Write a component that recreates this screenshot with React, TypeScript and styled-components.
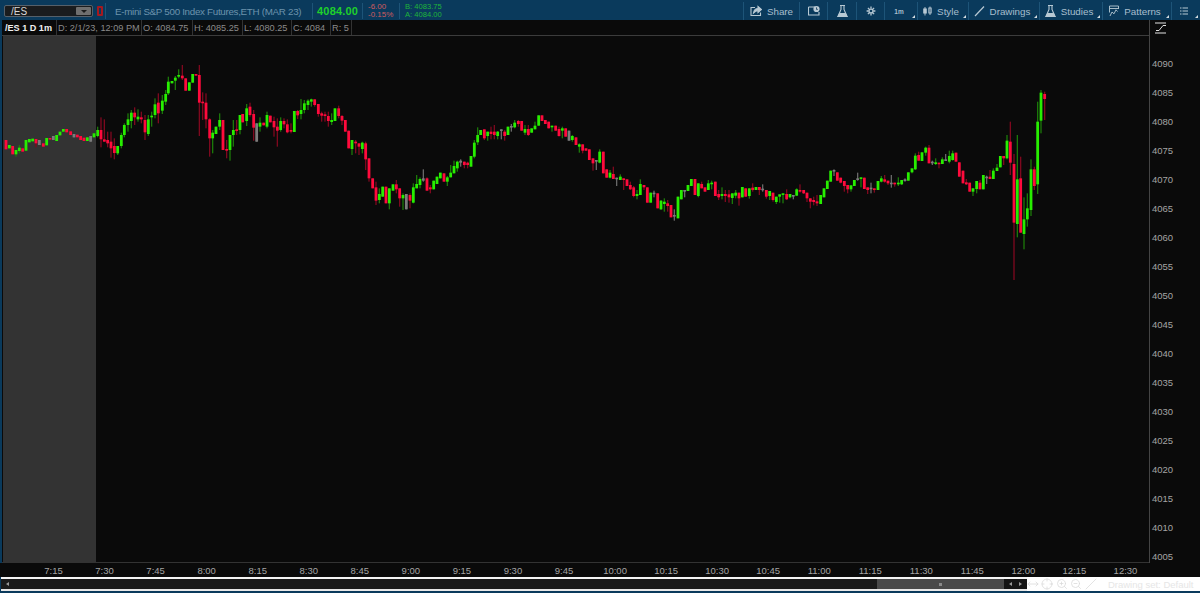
import React from "react";
import styled, { createGlobalStyle } from "styled-components";
import { Crosshair, MoveHorizontal, Slash, ZoomIn, ZoomOut } from "lucide-react";

const GlobalStyle = createGlobalStyle`
  html, body {
    margin: 0;
    padding: 0;
    background: #0a3a5c;
  }
  * {
    box-sizing: border-box;
  }
`;

const Page = styled.div`
  width: 1200px;
  height: 593px;
  display: flex;
  flex-direction: column;
  overflow: hidden;
  background: #0a3a5c;
  font-family: "Liberation Sans", Arial, sans-serif;
`;

const Toolbar = styled.div`
  height: 20px;
  flex: none;
  display: flex;
  align-items: center;
  padding: 2px 0 0 4px;
`;

const SymbolBox = styled.div`
  width: 89px;
  height: 12px;
  display: flex;
  align-items: center;
  justify-content: space-between;
  padding: 0 1px 0 6px;
  background: #1a1c1e;
  border: 1px solid #55606a;
  border-radius: 2px;
  color: #d8d8d8;
  font-size: 10px;
`;

const Caret = styled.span`
  width: 15px;
  height: 8px;
  display: flex;
  align-items: center;
  justify-content: center;
  background: #6f6f6f;
  border-radius: 1px;

  &::after {
    content: "";
    border-left: 3px solid transparent;
    border-right: 3px solid transparent;
    border-top: 3px solid #1c1c1c;
  }
`;

const Marker = styled.span`
  width: 6px;
  height: 10px;
  margin: 0 2px 0 4px;
  border: 2px solid #a5191f;
  border-radius: 1px;
  flex: none;
`;

const Divider = styled.span`
  width: 1px;
  height: 16px;
  flex: none;
  background: #1d5478;
`;

const Title = styled.div`
  width: 206px;
  padding-left: 9px;
  color: #6c93ac;
  font-size: 9.8px;
  letter-spacing: -0.3px;
  white-space: nowrap;
`;

const Last = styled.div`
  width: 49px;
  padding-left: 4px;
  color: #1fd02b;
  font-size: 11px;
  font-weight: 700;
  letter-spacing: 0.2px;
`;

const Stack = styled.div<{ $width: number; $color: string; $size: number }>`
  width: ${(p) => p.$width}px;
  padding-left: 5px;
  display: flex;
  flex-direction: column;
  color: ${(p) => p.$color};
  font-size: ${(p) => p.$size}px;
  line-height: 8px;
  white-space: nowrap;
`;

const Spacer = styled.div`
  flex: 1;
`;

const ToolButton = styled.div<{ $width: number; $menu?: boolean }>`
  position: relative;
  width: ${(p) => p.$width}px;
  height: 18px;
  flex: none;
  display: flex;
  align-items: center;
  justify-content: center;
  gap: 5px;
  padding-right: ${(p) => (p.$menu ? 4 : 0)}px;
  border-left: 1px solid #1d5478;
  color: #a8bfce;
  font-size: 9.8px;

  ${(p) =>
    p.$menu &&
    `&::after {
      content: "";
      position: absolute;
      right: 2px;
      bottom: 2px;
      border-left: 3px solid transparent;
      border-bottom: 3px solid #d5dde2;
    }`}
`;

const TinyLabel = styled.span`
  font-size: 6.5px;
  font-weight: 700;
  color: #a8bfce;
`;

const Body = styled.div`
  height: 543px;
  flex: none;
  display: flex;
  padding-left: 2px;
`;

const ChartColumn = styled.div`
  width: 1148px;
  flex: none;
  display: flex;
  flex-direction: column;
  background: #0a0a0a;
  border-right: 1px solid #444;
`;

const InfoRow = styled.div`
  height: 16px;
  flex: none;
  display: flex;
  align-items: stretch;
  padding-left: 2px;
  background: #0a0a0a;
  border-bottom: 1px solid #3c3c3c;
`;

const InfoCell = styled.div<{ $width: number; $strong?: boolean }>`
  width: ${(p) => p.$width}px;
  flex: none;
  display: flex;
  align-items: center;
  padding-left: 1px;
  border-right: 1px solid #333;
  color: ${(p) => (p.$strong ? "#f0f0f0" : "#8a8a8a")};
  font-size: ${(p) => (p.$strong ? 9.1 : 9.2)}px;
  font-weight: ${(p) => (p.$strong ? 700 : 400)};
  white-space: nowrap;
`;

const Plot = styled.div`
  flex: 1;
  min-height: 0;
  border-bottom: 1px solid #333;
`;

const PlotDrawing = styled.svg`
  display: block;
  width: 100%;
  height: 100%;
`;

const PriceAxis = styled.div`
  flex: 1;
  display: flex;
  flex-direction: column;
  padding: 2px 0 0 2px;
  background: #0a0a0a;
`;

const AutoScale = styled.svg`
  width: 11px;
  height: 12px;
  margin: 0 0 23.6px 3px;
  flex: none;
`;

const PriceList = styled.div`
  display: flex;
  flex-direction: column;
  gap: 17.06px;
`;

const PriceLabel = styled.div`
  height: 12px;
  line-height: 12px;
  color: #a4a4a4;
  font-size: 9.5px;
`;

const TimeAxis = styled.div`
  height: 14px;
  flex: none;
  display: flex;
  align-items: center;
  padding-left: 28px;
  background: #0a0a0a;
`;

const TimeLabel = styled.div`
  width: 51.05px;
  flex: none;
  text-align: center;
  color: #a4a4a4;
  font-size: 9.5px;
`;

const Footer = styled.div`
  height: 14px;
  flex: none;
  display: flex;
  padding-left: 1px;
`;

const Track = styled.div`
  flex: 1;
  display: flex;
  align-items: center;
  padding-left: 5px;
  background: #1b1b1b;
  border-top: 2px solid #f4f4f4;
  border-bottom: 2px solid #e8e8e8;
`;

const Thumb = styled(Track)`
  flex: none;
  width: 127px;
  justify-content: center;
  padding-left: 0;
  background: #4a4a4a;
`;

const Grip = styled.span`
  width: 3px;
  height: 3px;
  background: #8a8a8a;
`;

const TrackEnd = styled(Track)`
  flex: none;
  width: 23px;
  justify-content: space-between;
  padding: 0 5px;
  background: #151515;
`;

const Arrow = styled.span<{ $right?: boolean }>`
  border-top: 2.5px solid transparent;
  border-bottom: 2.5px solid transparent;
  ${(p) => (p.$right ? "border-left" : "border-right")}: 3px solid #9a9a9a;
`;

const FooterTools = styled.div`
  width: 173px;
  flex: none;
  display: flex;
  align-items: center;
  gap: 2.4px;
  padding-left: 0;
  background: #fff;
  color: #d8d8d8;
`;

const DrawingSet = styled.span`
  margin-left: 9px;
  color: #e6e6e6;
  font-size: 9.5px;
  white-space: nowrap;
`;

type Kind = "g" | "r" | "n";
type Row = [number, Kind, number, number, number?, number?];
type Segment = { x0: number; y0: number; rows: Row[] };

// traced from 3x crops of the chart: x/y in each row are crop units
const SEGMENTS: Segment[] = [
  {
    x0: 0,
    y0: 60,
    rows: [
      [18, "r", 240, 268], [28, "g", 255, 265], [38, "r", 258, 283], [48, "g", 270, 283, 270, 290],
      [58, "g", 263, 273, 255, 280], [68, "r", 265, 275], [78, "g", 240, 272], [88, "g", 237, 247],
      [98, "g", 236, 244], [108, "r", 237, 250, 237, 262], [118, "n", 240, 255], [130, "r", 250, 260],
      [140, "g", 234, 256], [150, "r", 234, 238], [160, "n", 228, 240], [170, "g", 225, 243],
      [180, "g", 215, 226], [190, "g", 207, 215], [200, "r", 207, 217], [212, "r", 214, 225],
      [222, "n", 222, 232], [232, "r", 224, 232], [242, "r", 228, 240], [252, "r", 233, 243],
      [262, "g", 232, 243], [272, "n", 228, 245], [282, "g", 220, 232], [293, "g", 210, 228, 200, 232],
      [303, "r", 210, 238, 172, 262], [313, "r", 238, 245, 178, 245], [323, "r", 240, 250, 215, 262],
      [333, "r", 245, 265, 215, 293], [343, "r", 258, 279, 235, 298], [353, "g", 258, 280, 258, 285],
      [364, "g", 225, 258, 218, 265], [373, "g", 195, 225, 190, 232], [384, "g", 178, 195, 160, 215],
      [394, "g", 158, 183, 150, 205], [404, "r", 158, 172, 142, 195], [414, "g", 170, 178, 148, 185],
      [424, "r", 172, 178, 155, 190], [435, "r", 180, 217, 165, 240], [445, "g", 178, 222, 165, 228],
      [455, "g", 167, 172, 155, 200], [465, "g", 133, 165, 115, 175], [475, "r", 128, 160, 100, 190],
      [487, "g", 122, 152, 105, 162], [497, "g", 102, 125, 90, 135], [505, "g", 65, 100, 50, 105],
      [516, "g", 63, 70], [526, "g", 53, 62, 48, 90], [536, "g", 45, 50, 28, 55],
      [547, "r", 47, 55, 15, 60], [557, "r", 55, 92], [568, "g", 67, 92], [578, "g", 42, 68],
      [588, "r", 42, 47], [598, "r", 45, 128, 15, 228], [608, "r", 125, 128, 97, 180],
      [618, "r", 128, 178, 100, 205], [629, "r", 178, 235, 175, 290], [638, "g", 218, 235, 210, 280],
      [648, "g", 200, 222], [659, "g", 180, 200, 160, 210], [669, "r", 180, 270],
      [680, "r", 267, 272, 240, 295], [690, "g", 225, 270, 225, 302], [700, "g", 210, 225, 180, 260],
      [710, "r", 208, 212, 180, 225],
    ],
  },
  {
    x0: 240,
    y0: 90,
    rows: [
      [0, "g", 75, 120, 75, 133], [8, "r", 72, 97], [20, "g", 55, 93, 42, 108], [30, "r", 50, 75, 38, 80],
      [41, "r", 72, 113, 60, 152], [50, "n", 100, 155], [60, "g", 98, 110, 82, 125], [71, "r", 98, 106],
      [81, "g", 75, 110, 65, 115], [91, "r", 77, 97], [102, "r", 93, 112, 80, 140],
      [112, "r", 110, 122, 85, 170], [122, "g", 93, 120, 82, 125], [132, "r", 93, 103, 85, 115],
      [142, "r", 103, 127, 88, 130], [153, "r", 120, 125, 100, 130], [163, "g", 63, 126],
      [173, "r", 63, 76, 60, 87], [183, "g", 60, 72, 27, 88], [193, "g", 40, 60, 30, 70],
      [204, "g", 32, 45, 28, 60], [214, "g", 28, 35, 26, 50], [224, "r", 28, 45, 28, 50],
      [235, "r", 42, 72, 42, 80], [245, "r", 70, 77, 65, 95], [255, "r", 73, 78, 65, 95],
      [265, "r", 78, 93, 65, 110], [275, "g", 90, 96, 70, 105], [285, "g", 55, 93],
      [296, "r", 55, 78, 47, 85], [306, "r", 78, 92, 75, 105], [316, "r", 90, 125],
      [326, "r", 122, 175], [336, "g", 150, 177, 150, 195], [347, "r", 155, 160, 150, 190],
      [357, "r", 160, 170, 160, 195], [367, "g", 158, 177, 155, 190], [377, "r", 160, 208, 155, 240],
      [387, "r", 205, 265, 205, 275], [398, "r", 265, 295], [408, "r", 292, 332, 275, 345],
      [418, "g", 312, 330, 295, 340], [428, "g", 290, 320], [438, "r", 290, 340],
      [448, "g", 295, 340, 295, 358], [459, "g", 283, 302], [469, "r", 283, 298, 270, 310],
      [479, "r", 295, 325, 295, 350], [489, "g", 315, 325, 310, 360], [499, "n", 312, 358],
      [510, "r", 315, 332, 310, 355], [520, "g", 292, 338, 280, 340], [530, "g", 282, 295, 255, 295],
      [540, "g", 267, 285, 262, 295], [550, "n", 265, 272, 238, 275], [561, "r", 265, 302, 262, 302],
      [571, "r", 292, 298, 285, 310], [581, "g", 272, 298], [591, "g", 260, 282], [601, "g", 248, 265],
      [612, "r", 250, 275], [622, "g", 262, 275, 258, 288], [632, "g", 248, 262, 225, 262],
      [642, "g", 228, 250, 212, 250], [652, "g", 215, 235, 212, 245], [662, "n", 212, 218, 208, 230],
      [673, "r", 215, 225, 215, 235], [683, "r", 218, 225, 215, 235], [693, "g", 198, 230],
      [703, "g", 158, 200, 150, 205], [713, "g", 135, 157, 112, 165],
    ],
  },
  {
    x0: 480,
    y0: 110,
    rows: [
      [2, "g", 60, 75], [13, "r", 58, 85, 58, 90], [23, "g", 65, 78, 65, 92], [33, "r", 65, 72, 50, 88],
      [43, "r", 65, 75, 45, 88], [53, "g", 65, 78, 63, 88], [64, "n", 58, 62, 58, 88],
      [74, "r", 65, 78, 60, 92], [84, "g", 50, 75], [94, "n", 48, 52, 42, 65],
      [104, "g", 38, 52, 30, 55], [115, "r", 33, 42, 30, 50], [125, "r", 33, 62],
      [135, "g", 57, 68, 45, 75], [145, "r", 57, 75, 45, 78], [155, "g", 55, 68],
      [165, "g", 47, 58, 35, 58], [176, "g", 16, 47], [186, "r", 16, 33], [196, "r", 30, 42],
      [206, "r", 35, 55], [216, "g", 47, 52, 47, 65], [227, "r", 47, 62], [237, "r", 57, 78, 50, 80],
      [247, "g", 55, 62, 50, 85], [257, "r", 55, 80], [267, "n", 62, 92], [277, "g", 78, 90, 75, 95],
      [288, "r", 82, 105], [298, "g", 103, 110, 100, 128], [308, "r", 103, 122, 103, 130],
      [318, "r", 115, 122], [328, "r", 118, 150], [339, "r", 145, 160, 145, 182],
      [349, "n", 150, 155, 150, 180], [359, "g", 125, 158, 118, 160], [370, "r", 125, 190],
      [380, "r", 178, 203], [390, "g", 188, 203, 180, 205], [400, "r", 192, 207, 170, 207],
      [410, "n", 203, 207, 203, 228], [421, "g", 200, 210, 193, 210], [431, "r", 205, 210, 205, 240],
      [441, "r", 208, 228], [451, "r", 225, 238, 215, 240], [461, "r", 232, 258, 228, 262],
      [471, "g", 252, 258, 240, 268], [481, "g", 222, 255, 208, 255], [492, "r", 225, 232, 225, 240],
      [502, "r", 232, 278], [512, "g", 248, 278], [522, "n", 248, 252, 242, 262], [533, "r", 250, 295],
      [543, "g", 272, 298, 270, 300], [553, "g", 275, 282, 265, 305], [563, "r", 280, 288, 270, 305],
      [573, "r", 285, 322], [583, "n", 315, 318, 298, 332], [594, "g", 260, 325], [604, "g", 240, 268],
      [614, "n", 240, 243, 240, 262], [624, "g", 225, 243], [634, "g", 207, 228], [645, "r", 207, 255],
      [655, "g", 220, 258, 220, 262], [665, "r", 222, 235, 215, 235], [675, "r", 232, 245],
      [685, "g", 220, 240, 210, 240], [695, "g", 218, 222, 212, 238], [706, "r", 215, 258],
      [716, "r", 252, 262, 240, 270],
    ],
  },
  {
    x0: 720,
    y0: 140,
    rows: [
      [6, "g", 162, 168, 142, 178], [16, "r", 162, 168, 150, 186], [27, "r", 163, 172, 150, 188],
      [37, "g", 160, 174, 160, 192], [47, "g", 158, 167, 150, 175], [57, "r", 158, 175, 158, 197],
      [67, "g", 141, 172], [77, "r", 145, 170], [88, "g", 145, 168, 145, 176], [98, "r", 143, 150, 130, 155],
      [108, "g", 141, 150], [118, "r", 141, 150, 141, 165], [128, "n", 146, 150, 133, 155],
      [139, "r", 150, 170, 150, 176], [149, "g", 153, 168, 153, 180], [159, "r", 158, 180, 158, 185],
      [169, "g", 170, 186, 170, 192], [179, "g", 163, 170, 163, 188], [189, "g", 160, 163, 160, 190],
      [200, "r", 162, 178, 148, 180], [210, "g", 162, 172, 162, 175], [220, "n", 165, 168, 165, 178],
      [230, "g", 148, 167, 145, 168], [240, "r", 150, 155, 133, 158], [251, "r", 150, 160, 150, 162],
      [261, "r", 158, 175, 158, 186], [271, "r", 175, 185, 175, 205], [281, "r", 180, 186, 170, 196],
      [291, "r", 184, 190, 165, 198], [302, "g", 165, 192], [312, "g", 145, 172], [322, "g", 122, 147],
      [332, "g", 92, 125], [342, "n", 90, 94, 88, 108], [352, "r", 97, 122], [362, "r", 113, 128, 113, 130],
      [373, "r", 123, 138, 123, 155], [383, "r", 135, 148, 135, 160], [393, "g", 136, 148, 136, 155],
      [403, "g", 120, 138], [413, "n", 115, 120, 98, 122], [423, "g", 112, 115, 112, 142],
      [433, "r", 113, 147], [443, "r", 142, 150, 142, 162], [453, "n", 143, 147, 128, 160],
      [463, "r", 145, 150, 145, 158], [474, "g", 123, 150], [484, "g", 115, 125, 108, 127],
      [494, "r", 118, 125, 105, 128], [504, "r", 122, 130, 122, 135], [514, "n", 128, 132, 105, 143],
      [524, "r", 128, 133, 128, 140], [535, "g", 128, 133, 112, 138], [545, "g", 120, 133, 120, 135],
      [555, "n", 118, 122, 115, 125], [565, "g", 97, 122], [576, "g", 85, 97, 85, 100],
      [586, "g", 47, 88, 40, 90], [596, "r", 45, 62, 35, 62], [606, "g", 37, 63], [617, "g", 23, 38, 20, 47],
      [627, "r", 23, 70, 15, 70], [637, "n", 65, 70, 62, 75], [647, "g", 67, 72, 55, 75],
      [657, "r", 68, 72, 68, 85], [667, "g", 58, 72, 52, 72], [677, "n", 58, 62, 42, 62],
      [688, "g", 48, 65, 32, 70], [698, "g", 40, 60, 32, 62], [708, "r", 38, 65], [718, "r", 67, 110],
    ],
  },
  {
    x0: 950,
    y0: 80,
    rows: [
      [39, "r", 272, 310], [49, "r", 307, 313, 297, 315], [59, "r", 308, 335], [69, "g", 325, 335, 325, 348],
      [80, "g", 303, 327, 303, 340], [90, "r", 308, 328, 300, 328], [100, "g", 285, 328],
      [110, "n", 290, 293, 287, 312], [120, "r", 290, 297, 270, 297], [130, "g", 272, 297, 265, 297],
      [141, "g", 263, 273, 252, 273], [151, "g", 228, 262], [161, "r", 228, 235, 228, 255],
      [171, "g", 182, 235, 165, 238], [181, "r", 185, 248, 125, 285], [192, "r", 252, 428, 222, 600],
      [202, "g", 298, 432, 165, 472], [212, "r", 295, 458, 230, 458], [222, "g", 418, 462, 352, 508],
      [232, "g", 385, 418, 340, 440], [243, "g", 268, 390, 238, 408], [253, "r", 268, 318, 260, 330],
      [263, "g", 125, 313, 65, 342], [273, "g", 38, 122, 30, 160], [284, "r", 42, 57, 35, 120],
    ],
  },
];

const BODY: Record<Kind, string> = { g: "#27ee00", r: "#ff0a3c", n: "#7c7c7c" };
const WICK: Record<Kind, string> = { g: "#1c7a0a", r: "#80091f", n: "#6a6a6a" };

const PRICES = Array.from({ length: 18 }, (_, i) => 4090 - i * 5);

const TIMES = [
  "7:15", "7:30", "7:45", "8:00", "8:15", "8:30", "8:45", "9:00", "9:15", "9:30", "9:45",
  "10:00", "10:15", "10:30", "10:45", "11:00", "11:15", "11:30", "11:45", "12:00", "12:15", "12:30",
];

const Candles = () => (
  <>
    {SEGMENTS.flatMap((seg) =>
      seg.rows.map(([x, kind, top, bottom, high, low]) => {
        const cx = seg.x0 + x / 3;
        const y1 = seg.y0 + top / 3;
        const y2 = seg.y0 + bottom / 3;
        const hi = high === undefined ? y1 : seg.y0 + high / 3;
        const lo = low === undefined ? y2 : seg.y0 + low / 3;
        return (
          <g key={`${seg.x0}-${x}`}>
            <rect x={cx - 0.65} y={hi} width={1.3} height={lo - hi} fill={WICK[kind]} />
            <rect
              x={cx - 1.4}
              y={y1}
              width={2.8}
              height={Math.max(y2 - y1, 1.6)}
              fill={BODY[kind]}
            />
          </g>
        );
      })
    )}
  </>
);

const Glyph = ({ children, width = 14 }: { children: React.ReactNode; width?: number }) => (
  <svg
    width={width}
    height={14}
    viewBox={`0 0 ${width} 14`}
    fill="none"
    stroke="#b8c9d4"
    strokeWidth={1.1}
  >
    {children}
  </svg>
);

const Flask = () => (
  <Glyph width={11}>
    <path d="M3 1.500h5M4 1.500v4L1 12.500h9L7 5.500v-4" />
    <path d="M2.500 9.500h6l1.500 3h-9z" fill="#b8c9d4" />
  </Glyph>
);

const App = () => {
  return (
    <Page>
      <GlobalStyle />
      <Toolbar>
        <SymbolBox>
          /ES
          <Caret />
        </SymbolBox>
        <Marker />
        <Divider />
        <Title>E-mini S&amp;P 500 Index Futures,ETH (MAR 23)</Title>
        <Divider />
        <Last>4084.00</Last>
        <Divider />
        <Stack $width={36} $color="#cf5a5e" $size={8}>
          <span>-6.00</span>
          <span>-0.15%</span>
        </Stack>
        <Divider />
        <Stack $width={60} $color="#1fb53a" $size={7.6}>
          <span>B: 4083.75</span>
          <span>A: 4084.00</span>
        </Stack>
        <Spacer />
        <ToolButton $width={56}>
          <Glyph width={12}>
            <path d="M5 3.500H1v8h9.500V8.500" />
            <path d="M3.500 9c.5-3 2.500-4.500 4.500-4.500V2.500l3.500 3-3.500 3V6.800C6 6.800 5 7.500 3.500 9z" fill="#b8c9d4" />
          </Glyph>
          Share
        </ToolButton>
        <ToolButton $width={28}>
          <Glyph width={12}>
            <path d="M0.500 3h7M0.500 3v8h10.500V8" />
            <circle cx={8.500} cy={5} r={3.100} fill="#b8c9d4" stroke="none" />
            <path d="M8.500 3.400v2h1.300" stroke="#0a3a5c" strokeWidth={0.8} />
          </Glyph>
        </ToolButton>
        <ToolButton $width={29}>
          <Flask />
        </ToolButton>
        <ToolButton $width={28}>
          <Glyph width={10}>
            <circle cx={5} cy={7} r={2.100} strokeWidth={1.5} />
            <path
              d="M5 2.600v1.500M5 9.900v1.500M0.600 7h1.500M7.900 7h1.500M1.900 3.900l1 1M7.100 9.100l1 1M1.900 10.100l1-1M7.100 4.900l1-1"
              strokeWidth={1.3}
            />
          </Glyph>
        </ToolButton>
        <ToolButton $width={33} $menu>
          <TinyLabel>1m</TinyLabel>
        </ToolButton>
        <ToolButton $width={51} $menu>
          <Glyph width={9}>
            <path d="M2 3v8.500M7 2.500v8.500" strokeWidth={0.9} />
            <rect x={0.800} y={5} width={2.400} height={4} fill="#b8c9d4" />
            <rect x={5.800} y={4} width={2.400} height={5} strokeWidth={0.9} />
          </Glyph>
          Style
        </ToolButton>
        <ToolButton $width={71} $menu>
          <Glyph width={11}>
            <path d="M1 12L10 2.500" strokeWidth={1.2} />
          </Glyph>
          Drawings
        </ToolButton>
        <ToolButton $width={63} $menu>
          <Flask />
          Studies
        </ToolButton>
        <ToolButton $width={69} $menu>
          <Glyph width={10}>
            <path d="M0.500 2h9M0.500 2v6.500M9.500 2v3M0.500 4.500h9" strokeWidth={0.9} />
            <path d="M1 12l2-4 2 1.800 2-4 1.500 1.700" strokeWidth={0.9} />
          </Glyph>
          Patterns
        </ToolButton>
        <ToolButton $width={29} $menu>
          <Glyph width={8}>
            <path d="M0 4h1.500M2.500 4H8M0 7h1.500M2.500 7H8M0 10h1.500M2.500 10H8" />
          </Glyph>
        </ToolButton>
      </Toolbar>

      <Body>
        <ChartColumn>
          <InfoRow>
            <InfoCell $width={53} $strong>
              /ES 1 D 1m
            </InfoCell>
            <InfoCell $width={85}>D: 2/1/23, 12:09 PM</InfoCell>
            <InfoCell $width={51}>O: 4084.75</InfoCell>
            <InfoCell $width={50}>H: 4085.25</InfoCell>
            <InfoCell $width={49}>L: 4080.25</InfoCell>
            <InfoCell $width={39}>C: 4084</InfoCell>
            <InfoCell $width={21}>R: 5</InfoCell>
          </InfoRow>
          <Plot>
            <PlotDrawing viewBox="2 36 1147 526" preserveAspectRatio="none">
              <rect x={3} y={36} width={93} height={526} fill="#333333" />
              <Candles />
            </PlotDrawing>
          </Plot>
        </ChartColumn>
        <PriceAxis>
          <AutoScale viewBox="0 0 11 12" fill="none" stroke="#e2e2e2">
            <path d="M0 1h11M0 11h11" strokeWidth={1.2} />
            <path d="M1 8.500h3L8 3.500h3" strokeWidth={1} />
          </AutoScale>
          <PriceList>
            {PRICES.map((price) => (
              <PriceLabel key={price}>{price}</PriceLabel>
            ))}
          </PriceList>
        </PriceAxis>
      </Body>

      <TimeAxis>
        {TIMES.map((time) => (
          <TimeLabel key={time}>{time}</TimeLabel>
        ))}
      </TimeAxis>

      <Footer>
        <Track>
          <Arrow />
        </Track>
        <Thumb>
          <Grip />
        </Thumb>
        <TrackEnd>
          <Arrow />
          <Arrow $right />
        </TrackEnd>
        <FooterTools>
          <MoveHorizontal size={12} strokeWidth={1.5} />
          <Crosshair size={12} strokeWidth={1.5} />
          <ZoomIn size={12} strokeWidth={1.5} />
          <ZoomOut size={12} strokeWidth={1.5} />
          <Slash size={12} strokeWidth={1.5} />
          <DrawingSet>Drawing set: Default</DrawingSet>
        </FooterTools>
      </Footer>
    </Page>
  );
};

export default App;
